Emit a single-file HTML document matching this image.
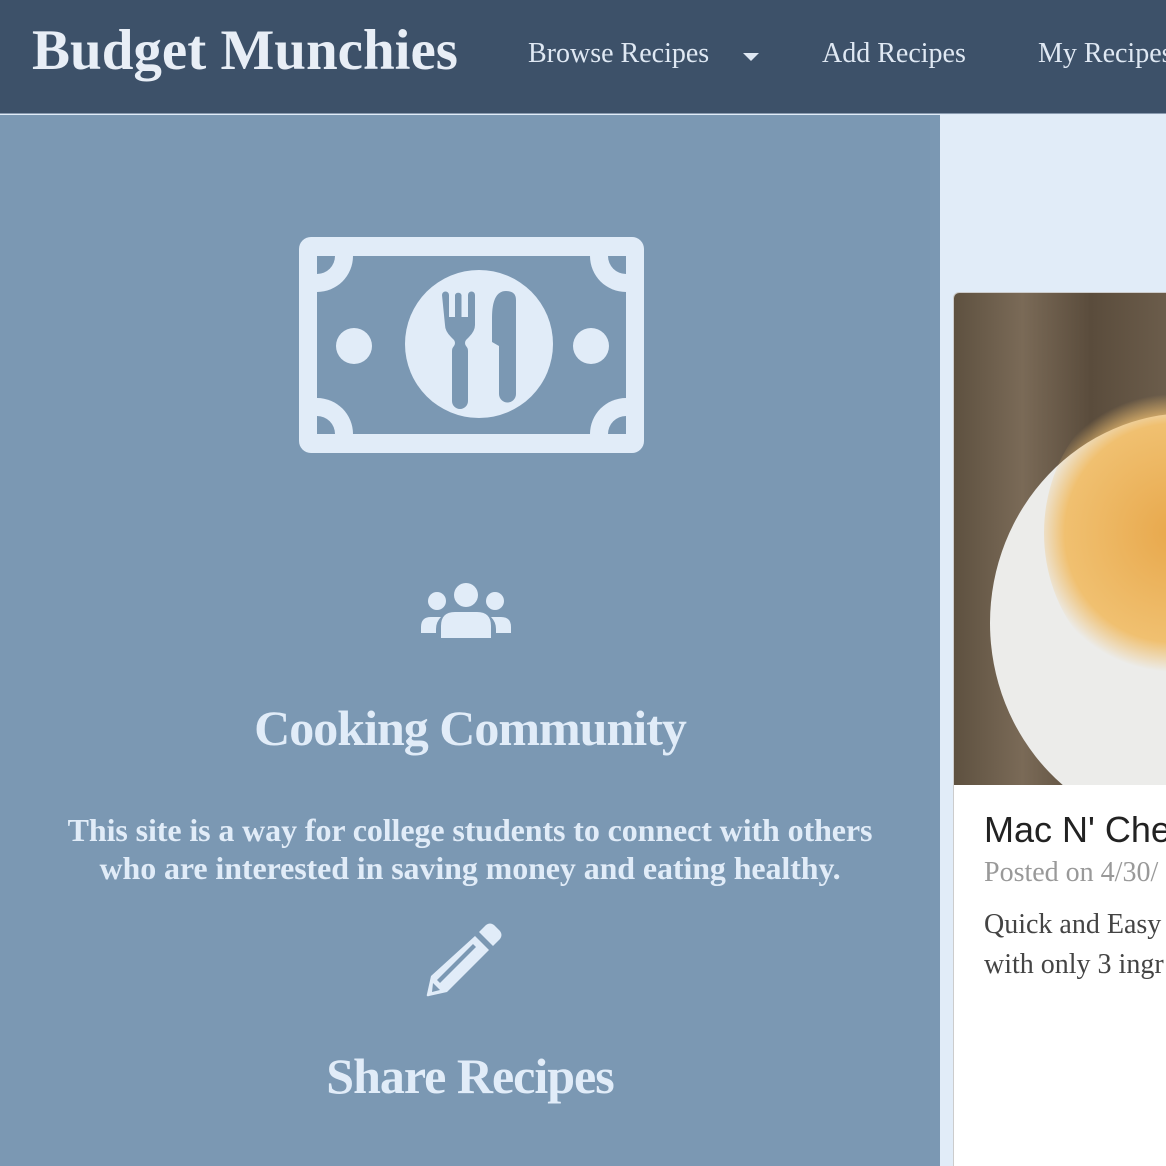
<!DOCTYPE html>
<html><head><meta charset="utf-8"><style>
*{margin:0;padding:0;box-sizing:border-box}
html,body{width:1166px;height:1166px;overflow:hidden}
body{background:#e1ecf8;font-family:"Liberation Serif",serif;position:relative}
.nav{position:absolute;left:0;top:0;width:1166px;height:114px;background:#3d5169;border-bottom:1px solid #8a9bb0}
.brand{position:absolute;left:32px;top:18px;font-size:57px;color:#e8eef6;font-weight:bold;letter-spacing:0px}
.nl{position:absolute;top:38px;font-size:28px;color:#dfe8f3}
.left{position:absolute;left:0;top:115px;width:940px;height:1051px;background:#7b98b3;color:#e1ecf8;text-align:center}
.card{position:absolute;left:953px;top:292px;width:230px;height:874px;background:#fff;border:1px solid #ccc;border-bottom:none;border-radius:6px 6px 0 0;overflow:hidden}
.img{height:492px;background:linear-gradient(90deg,#5e5140,#7a6a57 30%,#5a4c3c 60%,#6f604e);position:relative;overflow:hidden}
h2{font-size:50px;font-weight:bold;position:absolute;width:940px;left:0;letter-spacing:-1px}
p.t{position:absolute;width:940px;font-size:32px;font-weight:bold;line-height:38px;letter-spacing:-0.1px}
</style></head><body>
<div class="nav">
<div class="brand">Budget Munchies</div>
<div class="nl" style="left:528px">Browse Recipes</div>
<div style="position:absolute;left:743px;top:53px;width:0;height:0;border-left:8px solid transparent;border-right:8px solid transparent;border-top:8px solid #dfe8f3"></div>
<div class="nl" style="left:822px">Add Recipes</div>
<div class="nl" style="left:1038px;white-space:nowrap">My Recipes</div>
</div>
<div class="left">
<svg style="position:absolute;left:0;top:0" width="940" height="1051">
<defs><clipPath id="c"><rect x="317" y="141" width="309" height="178"/></clipPath></defs>
<rect x="299" y="122" width="345" height="216" rx="12" fill="#e1ecf8"/>
<rect x="317" y="141" width="309" height="178" fill="#7b98b3"/>
<g clip-path="url(#c)" fill="#e1ecf8">
<circle cx="317" cy="141" r="36"/><circle cx="626" cy="141" r="36"/><circle cx="317" cy="319" r="36"/><circle cx="626" cy="319" r="36"/>
</g>
<g clip-path="url(#c)" fill="#7b98b3">
<circle cx="317" cy="141" r="18"/><circle cx="626" cy="141" r="18"/><circle cx="317" cy="319" r="18"/><circle cx="626" cy="319" r="18"/>
</g>
<circle cx="354" cy="231" r="18" fill="#e1ecf8"/><circle cx="591" cy="231" r="18" fill="#e1ecf8"/>
<circle cx="479" cy="229" r="74" fill="#e1ecf8"/>
<g transform="translate(0,-115)" fill="#7b98b3">
<path d="M442 295a3.5 3.5 0 0 1 7 0v22h6v-22a3.5 3.5 0 0 1 6.5 0v22h6.5v-22a3.5 3.5 0 0 1 7 0v30q0 6-6 12l-3 3q-2 3 0 6q2 2 2 5v50a8 8 0 0 1-16 0v-50q0-3 2-5q2-3 0-6l-3-3q-6-6-6-12z"/>
<path d="M492 318q0-27 14-27q10 0 10 9v94a8.5 8.5 0 0 1-17 0v-48l-7-4z"/>
</g>
<g fill="#e1ecf8">
<circle cx="466" cy="480" r="12"/><circle cx="437" cy="486" r="9"/><circle cx="495" cy="486" r="9"/>
<path d="M441 523v-12q0-14 14-14h22q14 0 14 14v12z"/>
<path d="M421 518v-6q0-10 10-10h10q-5 5-5 12v4z"/><path d="M511 518v-6q0-10-10-10h-10q5 5 5 12v4z"/>
</g>
<g transform="translate(427,808)">
<path d="M59 2q4-3 8 0l6 6q3 4 0 8l-7 7l-14-14z" fill="#e1ecf8"/>
<path d="M48 13l14 14l-42 42l-18 4q-3 1-2-2l4-18z" fill="#e1ecf8"/>
<path d="M10 57l36-36l3 3l-36 36z" fill="#7b98b3"/>
<path d="M6 60l7 7l-8 2z" fill="#7b98b3"/>
</g>
</svg>
<h2 style="top:584px">Cooking Community</h2>
<p class="t" style="top:696px">This site is a way for college students to connect with others<br>who are interested in saving money and eating healthy.</p>
<h2 style="top:932px">Share Recipes</h2>
</div>
<div class="card">
<div class="img">
<div style="position:absolute;left:36px;top:120px;width:400px;height:420px;border-radius:50%;background:#ececea"></div>
<div style="position:absolute;left:90px;top:90px;width:260px;height:300px;border-radius:50%;background:radial-gradient(circle,#e8a84c,#f0c070 55%,transparent 70%)"></div>
</div>
<div style="position:absolute;left:30px;top:516px;font-family:'Liberation Sans',sans-serif;font-size:36px;color:#222;white-space:nowrap">Mac N' Cheese</div>
<div style="position:absolute;left:30px;top:564px;font-size:28px;color:#999;white-space:nowrap">Posted on 4/30/</div>
<div style="position:absolute;left:30px;top:612px;font-size:28px;color:#444;line-height:40px;white-space:nowrap">Quick and Easy<br>with only 3 ingr</div>
</div>
</body></html>
